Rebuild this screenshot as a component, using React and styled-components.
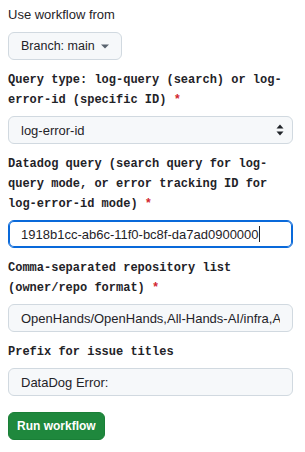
import React from "react"
import styled, { createGlobalStyle } from "styled-components"

const GlobalStyle = createGlobalStyle`
  body {
    margin: 0;
    background: #ffffff;
    color: #1f2328;
    font-family: "Liberation Sans", Arial, sans-serif;
  }
`

const Form = styled.div`
  width: 305px;
  box-sizing: border-box;
  padding: 5px 12px 12px 8px;
  display: flex;
  flex-direction: column;
`

const Title = styled.div`
  font-size: 13px;
  line-height: 20px;
  margin-bottom: 7px;
`

const Button = styled.button`
  align-self: flex-start;
  display: inline-flex;
  align-items: center;
  gap: 6px;
  height: 28px;
  box-sizing: border-box;
  padding: 0 ${(p) => (p.$primary ? "8px" : "12px")};
  border-radius: 6px;
  border: 1px solid ${(p) => (p.$primary ? "#1a7f37" : "#d1d9e0")};
  background: ${(p) => (p.$primary ? "#1f883d" : "#f6f8fa")};
  color: ${(p) => (p.$primary ? "#ffffff" : "#1f2328")};
  font-family: "Liberation Sans", Arial, sans-serif;
  font-size: ${(p) => (p.$primary ? "12px" : "12.5px")};
  font-weight: ${(p) => (p.$primary ? 700 : 400)};
  cursor: pointer;
`

const Field = styled.div`
  display: flex;
  flex-direction: column;
  margin-top: 10px;
`

const Label = styled.label`
  font-family: "Liberation Mono", "DejaVu Sans Mono", monospace;
  font-size: 12px;
  font-weight: 700;
  line-height: 20px;
  margin-bottom: 6px;
`

const Required = styled.span`
  color: #d1242f;
`

const Control = styled.div`
  position: relative;
  height: 28px;
  box-sizing: border-box;
  display: flex;
  align-items: center;
  padding: 0 12px;
  border-radius: 6px;
  border: 1px solid ${(p) => (p.$focused ? "#0969da" : "#d1d9e0")};
  box-shadow: ${(p) => (p.$focused ? "inset 0 0 0 1px #0969da" : "none")};
  background: ${(p) => (p.$focused ? "#ffffff" : "#f6f8fa")};
  font-size: 13px;
`

const Value = styled.span`
  flex: 1;
  min-width: 0;
  white-space: nowrap;
  overflow: hidden;
  display: flex;
  align-items: center;
`

const Caret = styled.span`
  display: inline-block;
  width: 1px;
  height: 16px;
  background: #1f2328;
`

const SelectArrows = styled.svg`
  position: absolute;
  right: 8px;
  top: 50%;
  transform: translateY(-50%);
`

const Submit = styled(Button)`
  margin-top: 16px;
`

const fields = [
  {
    label: "Query type: log-query (search) or log-error-id (specific ID)",
    required: true,
    value: "log-error-id",
    select: true,
  },
  {
    label:
      "Datadog query (search query for log-query mode, or error tracking ID for log-error-id mode)",
    required: true,
    value: "1918b1cc-ab6c-11f0-bc8f-da7ad0900000",
    focused: true,
  },
  {
    label: "Comma-separated repository list (owner/repo format)",
    required: true,
    value: "OpenHands/OpenHands,All-Hands-AI/infra,All-Hands-AI/docs",
  },
  {
    label: "Prefix for issue titles",
    value: "DataDog Error:",
  },
]

const App = () => {
  return (
    <>
      <GlobalStyle />
      <Form>
        <Title>Use workflow from</Title>
        <Button>
          Branch: main
          <svg width="8" height="5" viewBox="0 0 8 5">
            <path d="M0 0.5 L8 0.5 L4 4.5 Z" fill="#59636e" />
          </svg>
        </Button>

        {fields.map((f) => (
          <Field key={f.label}>
            <Label>
              {f.label}
              {f.required && <Required> *</Required>}
            </Label>
            <Control $focused={f.focused}>
              <Value>
                {f.value}
                {f.focused && <Caret />}
              </Value>
              {f.select && (
                <SelectArrows width="8" height="12" viewBox="0 0 8 12">
                  <path d="M4 0.5 L7.5 4.5 L0.5 4.5 Z" fill="#1f2328" />
                  <path d="M0.5 7.5 L7.5 7.5 L4 11.5 Z" fill="#1f2328" />
                </SelectArrows>
              )}
            </Control>
          </Field>
        ))}

        <Submit $primary>Run workflow</Submit>
      </Form>
    </>
  )
}

export default App
